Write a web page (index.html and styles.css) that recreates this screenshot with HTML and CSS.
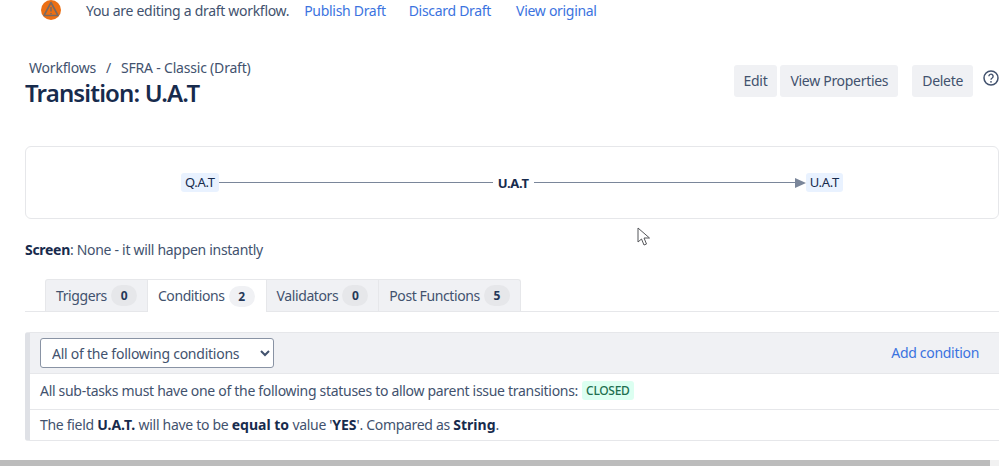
FILE: index.html
```html
<!DOCTYPE html>
<html lang="en">
<head>
<meta charset="utf-8">
<title>Transition: U.A.T</title>
<link rel="stylesheet" href="styles.css">
</head>
<body>
<div class="banner">
  <svg class="warn" width="22" height="22" viewBox="0 0 22 22"><circle cx="11" cy="11" r="10" fill="#ec6f14"/><path d="M11 3.5 L18 16.5 H4 Z" fill="none" stroke="#7a6a62" stroke-width="1.6" stroke-linejoin="round"/><path d="M11 8v4.5M11 14v1.2" stroke="#7a6a62" stroke-width="1.5"/></svg>
  <span class="banner-text">You are editing a draft workflow.</span>
  <a class="link l1">Publish Draft</a>
  <a class="link l2">Discard Draft</a>
  <a class="link l3">View original</a>
</div>
<header class="head">
  <div class="titles">
    <div class="crumbs"><span>Workflows</span><span class="sep">/</span><span>SFRA - Classic (Draft)</span></div>
    <h1>Transition: U.A.T</h1>
  </div>
  <div class="actions">
    <button class="btn edit">Edit</button>
    <button class="btn">View Properties</button>
    <button class="btn del">Delete</button>
    <svg class="help" width="16" height="16" viewBox="0 0 16 16"><circle cx="8" cy="8" r="7" fill="none" stroke="#42526e" stroke-width="1.5"/><path d="M5.9 6.3a2.1 2.1 0 1 1 3.3 1.7c-.8.5-1.2.9-1.2 1.8" fill="none" stroke="#42526e" stroke-width="1.4"/><circle cx="8" cy="11.8" r=".9" fill="#42526e"/></svg>
  </div>
</header>
<section class="diagram">
  <span class="status">Q.A.T</span>
  <span class="line first"></span>
  <strong class="trans">U.A.T</strong>
  <span class="line"></span>
  <svg class="arrow" width="11" height="10" viewBox="0 0 11 10"><path d="M0 0L11 5L0 10Z" fill="#7a869a"/></svg>
  <span class="status">U.A.T</span>
</section>
<p class="screen"><b>Screen</b>: None - it will happen instantly</p>
<nav class="tabs">
  <div class="tab">Triggers <span class="count">0</span></div>
  <div class="tab active">Conditions <span class="count">2</span></div>
  <div class="tab">Validators <span class="count">0</span></div>
  <div class="tab">Post Functions <span class="count">5</span></div>
</nav>
<section class="panel">
  <div class="panel-head">
    <select class="sel"><option>All of the following conditions</option></select>
    <a class="link add">Add condition</a>
  </div>
  <div class="row"><span>All sub-tasks must have one of the following statuses to allow parent issue transitions:</span><span class="lozenge">CLOSED</span></div>
  <div class="row"><span>The field <b>U.A.T.</b> will have to be <b>equal to</b> value '<b>YES</b>'. Compared as <b>String</b>.</span></div>
</section>
<div class="scrollbar"><div class="thumb"></div></div>
<svg class="cursor" width="14" height="20" viewBox="0 0 14 20"><path d="M1 1V15L4.5 12L7 18L9.5 17L7 11H12.5Z" fill="#fff" stroke="#55565a" stroke-width="1"/></svg>
</body>
</html>
```
FILE: styles.css
```css
* { box-sizing: border-box; }
html, body { margin: 0; height: 466px; overflow: hidden; }
body { position: relative; background: #fff; color: #42526e; font-family: "Noto Sans", "Open Sans", sans-serif; font-size: 14px; line-height: 20px; letter-spacing: -0.3px; }
b, strong { color: #172b4d; font-weight: 700; }
.link { color: #3b73e0; text-decoration: none; }
.banner { display: flex; align-items: center; height: 22px; padding-left: 40px; }
.warn { margin-top: -3px; }
.banner-text { margin-left: 24px; }
.l1 { margin-left: 15px; }
.l2 { margin-left: 23px; }
.l3 { margin-left: 25px; }
.head { display: flex; justify-content: space-between; height: 124px; padding-left: 25px; }
.titles { padding-top: 36px; }
.crumbs { display: flex; padding-left: 4px; gap: 10px; height: 20px; letter-spacing: -0.2px; }
.sep { color: #42526e; }
h1 { margin: 0; color: #172b4d; font-size: 24px; line-height: 30px; font-weight: 600; letter-spacing: -0.85px; }
.actions { display: flex; align-items: flex-start; padding-top: 43px; }
.btn { height: 32px; padding: 0 10px; margin-left: 3px; border: 0; border-radius: 3px; background: #f0f1f4; color: #42526e; font: inherit; letter-spacing: inherit; }
.del { margin-left: 14px; }
.help { margin: 5px 0 0 10px; flex: none; width: 16px; height: 16px; }
.diagram { display: flex; align-items: center; height: 73px; margin-left: 25px; padding: 0 155px; border: 1px solid #e6e7ea; border-radius: 6px; }
.status { height: 19px; padding: 0 4px; border-radius: 3px; background: #e9f2ff; color: #172b4d; font-size: 13px; line-height: 19px; }
.line { flex: 1; height: 1px; background: #7a869a; }
.first { flex: none; width: 274px; }
.trans { margin: 0 5px; font-size: 13px; }
.arrow { flex: none; }
.screen { margin: 21px 0 0 25px; height: 20px; }
.tabs { display: flex; margin: 19px 0 0 25px; padding-left: 20px; height: 33px; border-bottom: 1px solid #e6e7ea; letter-spacing: -0.4px; }
.tab { display: flex; align-items: center; justify-content: center; height: 32px; padding: 0 10px; gap: 4px; background: #f0f1f4; border: 1px solid #e6e7ea; border-bottom: 0; }
.tab + .tab { border-left: 0; }
.tab:first-child { border-radius: 3px 0 0 0; }
.tab:last-child { border-radius: 0 3px 0 0; }
.active { background: #fff; height: 33px; padding: 0 11px 0 10px; }
.count { display: inline-block; min-width: 26px; height: 21px; border-radius: 11px; background: #e6e7ea; color: #253858; font-size: 12px; font-weight: 700; line-height: 21px; text-align: center; }
.active .count { background: #f0f1f4; }
.panel { margin: 20px 0 0 25px; border-left: 5px solid #dfe1e6; border-top: 1px solid #e6e7ea; border-bottom: 1px solid #e6e7ea; border-radius: 3px 0 0 3px; }
.panel-head { display: flex; align-items: center; justify-content: space-between; height: 41px; padding: 0 20px 0 10px; background: #f0f1f4; border-bottom: 1px solid #e6e7ea; }
.sel { width: 234px; height: 30px; padding: 0 7px; border: 1px solid #8993a4; border-radius: 3px; background: #fff; color: #42526e; font: inherit; letter-spacing: -0.24px; }
.row { display: flex; align-items: center; gap: 4px; height: 35px; padding: 0 0 2px 10px; white-space: pre; }
.row + .row { height: 31px; padding-bottom: 0; border-top: 1px solid #e6e7ea; }
.row b { letter-spacing: 0; }
.lozenge { height: 19px; padding: 0 4px; border-radius: 3px; background: #dcfff1; color: #216e4e; font-size: 12px; font-weight: 500; line-height: 19px; }
.scrollbar { position: absolute; left: 0; right: 0; bottom: 0; height: 6px; background: #f1f1f1; }
.thumb { width: 990px; height: 6px; background: #bcbcbc; }
.cursor { position: absolute; left: 637px; top: 227px; }
```
